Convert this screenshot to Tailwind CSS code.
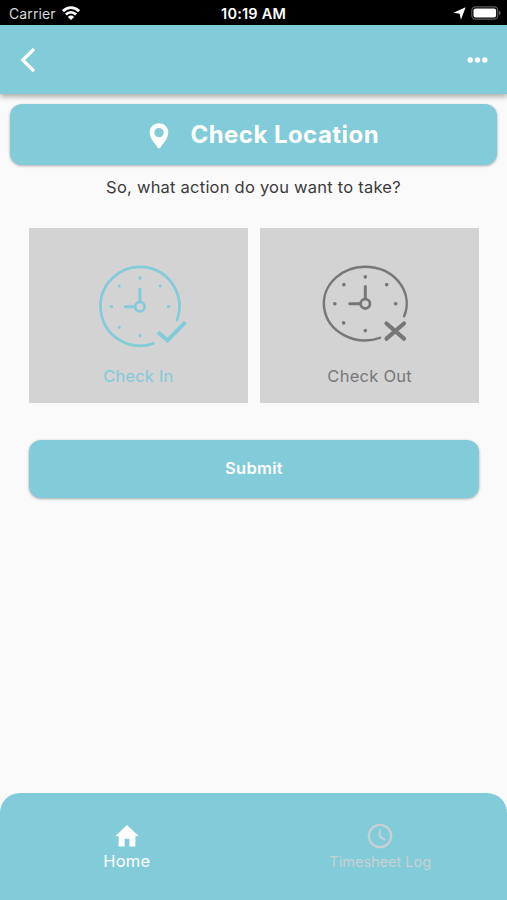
<!DOCTYPE html>
<html lang="en">
<head>
<meta charset="utf-8">
<title>Check Location</title>
<script src="https://cdn.jsdelivr.net/npm/@tailwindcss/browser@4"></script>
</head>
<body class="bg-[#fafafa] font-['Inter',sans-serif]">
<div class="flex h-[900px] w-[507px] flex-col overflow-hidden">
  <div class="grid h-[25px] shrink-0 grid-cols-3 items-center bg-black pt-[3px] text-white">
    <div class="flex items-center gap-[6px] pl-[9px]">
      <span class="text-[14px] leading-[20px] tracking-[0.1px] text-[#d8d8d8]">Carrier</span>
      <svg class="mt-[-2px] h-[14px] w-[18px]" viewBox="0 0 18 14" fill="none" stroke="#fff" stroke-width="2.800"><path d="M0.9 5.2C5.5 .5 12.500 .5 17.100 5.200"/><path d="M3.900 8.500C6.900 5.600 11.100 5.600 14.100 8.500"/><path d="M5.800 10.900Q9 8.100 12.200 10.900L9 13.900Z" fill="#fff" stroke="none"/></svg>
    </div>
    <span class="text-center text-[14.500px] leading-[20px] font-semibold tracking-[0.200px] whitespace-nowrap">10:19 AM</span>
    <div class="mt-[-2px] flex items-center justify-end gap-[5px] pr-[6px]">
      <svg class="h-[13px] w-[13px]" viewBox="0 0 12 12" fill="#fff"><path d="M11.700 .3L7.300 11.700L6.200 6.200L.3 5.300Z"/></svg>
      <svg class="h-[14px] w-[30px]" viewBox="0 0 30 14"><rect x=".8" y=".8" width="26" height="12.400" rx="3.600" fill="none" stroke="#5c5c5c" stroke-width="1.200"/><rect x="2.500" y="2.500" width="22.600" height="9" rx="2" fill="#fff"/><path d="M28 4.800Q29.800 5.500 29.800 7T28 9.200Z" fill="#5c5c5c"/></svg>
    </div>
  </div>
  <header class="flex h-[69px] shrink-0 items-center justify-between bg-[#82cbd8] pr-[19px] pl-[20px] shadow-[0_3px_5px_rgba(0,0,0,0.3)]">
    <svg class="h-[24px] w-[16px]" viewBox="0 0 16 24" fill="none" stroke="#fff" stroke-width="3.300"><path d="M14 1L2.800 12.100L14 23.200"/></svg>
    <svg class="h-[6px] w-[21px]" viewBox="0 0 21 6" fill="#fff"><circle cx="3.200" cy="3" r="2.700"/><circle cx="10.500" cy="3" r="2.700"/><circle cx="17.800" cy="3" r="2.700"/></svg>
  </header>
  <main class="flex flex-1 flex-col">
    <div class="mx-[10px] mt-[10px] flex h-[61px] items-center gap-[22px] rounded-[12px] bg-[#82cbd8] pl-[138.500px] shadow-[0_1px_3px_rgba(0,0,0,0.32)]">
      <svg class="mt-[3px] h-[26px] w-[20px]" viewBox="0 0 20 26" fill="#fff" fill-rule="evenodd"><path d="M10 .3C4.700 .3 .7 4.300 .7 9.300C.7 15.500 6 20.500 8.700 24.700Q10 26.300 11.300 24.700C14 20.500 19.300 15.500 19.300 9.300C19.300 4.300 15.300 .3 10 .3ZM10 4.900A4.700 4.700 0 1 1 10 14.300A4.700 4.700 0 1 1 10 4.900Z"/></svg>
      <span class="text-[24px] leading-[30px] font-bold tracking-[0.450px] whitespace-nowrap text-white">Check Location</span>
    </div>
    <p class="mt-[10px] text-center text-[16.5px] leading-[24px] tracking-[0.230px] text-[#3a3a3a]">So, what action do you want to take?</p>
    <div class="mr-[28px] ml-[29px] mt-[29px] grid h-[174.5px] grid-cols-2 gap-[12.5px]">
      <div class="flex flex-col items-center bg-[#d3d3d3] text-[#82cbd8]">
        <svg class="mt-[32px] ml-[8px] h-[92px] w-[95px]" viewBox="95 260 95 92" fill="none" stroke="currentColor" stroke-width="2.700" stroke-linecap="round"><path d="M176.800 320.200A39.400 39.400 0 1 0 153.200 343.400"/><circle cx="139.900" cy="306.700" r="4.700"/><path d="M139.900 301.500V289M134.700 306.700H125.500" stroke-width="3"/><path d="M139.900 277.500v1M160.100 285.800v.5M168.200 306.700h1M119.300 285.800v.5M110.800 306.700h1M119.300 327v.5M139.900 335v1"/><path d="M159.500 333.500L167.500 340.300L184 323.700" stroke-width="4" stroke-linecap="square"/></svg>
        <span class="mt-[12px] text-[16.5px] leading-[24px] tracking-[0.200px]">Check In</span>
      </div>
      <div class="flex flex-col items-center bg-[#d3d3d3] text-[#777777]">
        <svg class="mt-[32px] mr-[8px] h-[92px] w-[95px]" viewBox="318 260 95 92" fill="none" stroke="currentColor" stroke-width="2.500" stroke-linecap="round"><path d="M404.100 316.300A41.400 36.800 0 1 0 380 337.900"/><circle cx="365.300" cy="303.800" r="4.700" stroke-width="2.800"/><path d="M365.300 298.500V286.500M360 303.800H349.700" stroke-width="3"/><path d="M365.300 276.700v.2M386.700 284.600v.2M395.600 303.800h.2M343.900 284.600v.2M334.700 303.800h.2M343.600 322.800v.2M365.300 330.600v.2" stroke-width="3.600"/><path d="M386.500 323.500L404 338.700M404 323.500L386.500 338.700" stroke-width="4.200"/></svg>
        <span class="mt-[12px] text-[16.5px] leading-[24px] tracking-[0.250px]">Check Out</span>
      </div>
    </div>
    <div class="mr-[28px] ml-[29px] mt-[37.5px] flex h-[57.5px] items-center justify-center rounded-[12px] bg-[#82cbd8] text-[16.5px] font-semibold tracking-[0.300px] text-white shadow-[0_1px_3px_rgba(0,0,0,0.32)]">Submit</div>
  </main>
  <nav class="grid h-[107px] shrink-0 grid-cols-2 rounded-t-[20px] bg-[#82cbd8]">
    <div class="flex flex-col items-center pt-[32px] text-white">
      <svg class="h-[22px] w-[24px]" viewBox="0 0 24 22" fill="currentColor"><path d="M12 0L.2 11.200H3.600V21.500H9.600V13.800H14.400V21.500H20.400V11.200H23.800Z"/></svg>
      <span class="mt-[2px] text-[16.500px] leading-[24px] tracking-[0.150px]">Home</span>
    </div>
    <div class="flex flex-col items-center pt-[30px] text-[#c8d0d3]">
      <svg class="h-[26px] w-[26px]" viewBox="0 0 26 26" fill="none" stroke="currentColor" stroke-width="2.300"><circle cx="13" cy="13" r="11.200"/><path d="M12.700 6.500V13.500L18.200 17" stroke-width="2"/></svg>
      <span class="mt-[1px] text-[14.500px] leading-[24px]">Timesheet Log</span>
    </div>
  </nav>
</div>
</body>
</html>
